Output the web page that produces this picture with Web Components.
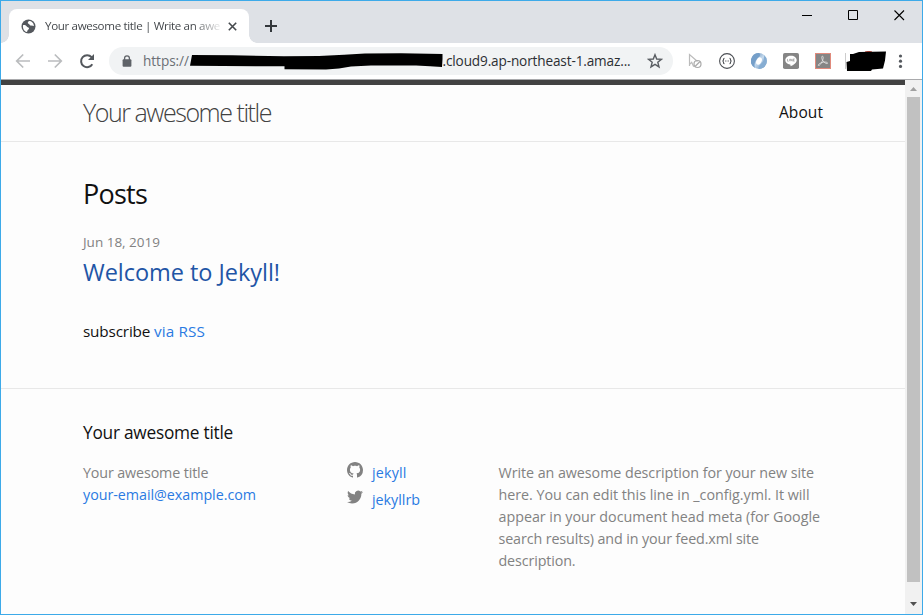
<!DOCTYPE html>
<html lang="en">
<head>
<meta charset="utf-8">
<title>Your awesome title | Write an awesome description</title>
<style>
body{margin:0;overflow:hidden;font-family:"Open Sans","Noto Sans",sans-serif;background:#fff}
</style>
</head>
<body>
<browser-window>
  <tab-strip slot="tabs"></tab-strip>
  <address-bar slot="toolbar"></address-bar>
  <site-page slot="page"></site-page>
  <scroll-bar slot="scroll"></scroll-bar>
</browser-window>
<script>
const define = (name, html) => customElements.define(name, class extends HTMLElement {
  constructor() {
    super();
    this.attachShadow({mode: 'open'}).innerHTML = html;
  }
});

// One line of text, tracked so that it fills the width given in "w".
customElements.define('fit-text', class extends HTMLElement {
  constructor() {
    super();
    this.attachShadow({mode: 'open'}).innerHTML =
      '<style>:host{display:inline-block;white-space:nowrap}span{display:inline-block}</style><span><slot></slot></span>';
  }
  connectedCallback() {
    const target = Number(this.getAttribute('w'));
    const span = this.shadowRoot.querySelector('span');
    const n = this.textContent.length;
    if (target && n) {
      span.style.letterSpacing = (target - span.getBoundingClientRect().width) / n + 'px';
      this.style.width = target + 'px';
    }
  }
});

define('tab-strip', `<style>
:host{display:flex;height:42px;background:#dee1e6;align-items:flex-end;color:#45494d}
.tab{position:relative;width:240px;height:34px;margin-left:8px;background:#fff;border-radius:8px 8px 0 0;display:flex;align-items:center;box-sizing:border-box;padding-left:12px}
.tab:before,.tab:after{content:"";position:absolute;bottom:0;width:8px;height:8px}
.tab:before{left:-8px;background:radial-gradient(circle at 0 0,transparent 7.5px,#fff 8px)}
.tab:after{right:-8px;background:radial-gradient(circle at 100% 0,transparent 7.5px,#fff 8px)}
.name{width:176px;margin:0 0 0 9px;font-size:11.600px;line-height:18px;-webkit-mask:linear-gradient(90deg,#000 148px,transparent 178px);mask:linear-gradient(90deg,#000 148px,transparent 178px)}
.x{margin-left:7px}.plus{margin:0 auto 10px 15px}
.controls{display:flex;align-self:flex-start;margin:9px 17px 0 0;gap:35px}
svg{display:block;flex:none}
</style>
<div class="tab"><svg width="15" height="15" viewBox="0 0 15 15"><circle cx="7.5" cy="7.5" r="7" fill="#54585d"/><path d="M2 6.2c1.800-.4 3.200.2 3.800 1.400.4.900 1.600.5 2.100 1.400.5 1-.7 1.500-1.300 2.300-.3.600-.2 1.300-.7 1.700C3.200 12.500 1.600 9.500 2 6.200zM8 2.100c-.8.600-1.300 1.200-1.200 1.900.2.900 1.300.6 1.500 1.300.2 1 1.400 1.500 2.300 1.300.9-.1 1.400.5 2.300.4C12.900 4.200 10.500 2.100 8 2.100z" fill="#fff"/></svg>
<div class="name"><fit-text w="175">Your awesome title | Write an awe</fit-text></div>
<svg class="x" width="9" height="9"><path d="M.8.8l7.400 7.400M8.200.8L.8 8.200" stroke="#45494d" stroke-width="1.600"/></svg></div>
<svg class="plus" width="14" height="14"><path d="M7 1v12M1 7h12" stroke="#33373b" stroke-width="2"/></svg>
<div class="controls"><svg width="11" height="11"><path d="M0 5.500h10" stroke="#000"/></svg><svg width="11" height="11"><path d="M.5.500h9v9h-9z" fill="none" stroke="#000"/></svg><svg width="11" height="11"><path d="M.5.500l9.500 9.500M10 .5l-9.500 9.500" stroke="#000" stroke-width="1.100"/></svg></div>`);

define('address-bar', `<style>
:host{position:relative;display:flex;align-items:center;height:36px;background:#fff;border-bottom:1px solid #a9aaac}
svg{display:block;flex:none}
.nav{display:flex;gap:16px;margin-left:14px}
.pill{display:flex;align-items:center;box-sizing:border-box;width:564px;height:28px;margin-left:14px;border-radius:14px;background:#f1f3f4;padding:0 9px 0 13px}
.url{display:flex;margin-left:11px;width:488px;font-size:13.600px;line-height:20px;color:#2c2f33}
.url .gray{color:#6b6f74;width:49px}.host{margin-left:250.500px}
.star{margin-left:16px}
.ext{display:flex;align-items:center;gap:16px;margin-left:14px}
.mark{position:absolute;left:0;top:0}
</style>
<div class="nav"><svg width="16" height="16" fill="none" stroke="#babcbe" stroke-width="1.700"><path d="M15 8H2M8.200 1.500L1.700 8l6.500 6.500"/></svg><svg width="16" height="16" fill="none" stroke="#babcbe" stroke-width="1.700"><path d="M1 8h13M7.800 1.500L14.300 8l-6.500 6.500"/></svg><svg width="16" height="16" fill="none" stroke="#54585d" stroke-width="2"><path d="M13.300 11.200A6 6 0 1 1 12.600 4.200L13.800 5.800"/><path d="M15 1v6H9z" fill="#54585d" stroke="none"/></svg></div>
<div class="pill"><svg width="10" height="12" viewBox="0 0 10 12"><path d="M2.600 5V3.200a2.400 2.400 0 0 1 4.800 0V5" fill="none" stroke="#5f6368" stroke-width="1.300"/><rect x=".6" y="4.200" width="8.800" height="7.500" rx="1" fill="#5f6368"/></svg>
<div class="url"><span class="gray"><fit-text w="46">https://</fit-text></span><span class="host"><fit-text w="188">.cloud9.ap-northeast-1.amaz...</fit-text></span></div>
<svg class="star" width="16" height="16" viewBox="0 0 16 16"><path d="M8 1.700l1.700 4.300 4.700.3-3.600 3 1.200 4.600-4-2.500-4 2.500 1.200-4.600-3.600-3 4.700-.3z" fill="none" stroke="#5a5e63" stroke-width="1.400"/></svg></div>
<div class="ext">
<svg width="16" height="16" viewBox="0 0 16 16" fill="none" stroke="#bbb" stroke-width="1.200"><path d="M2.500 13V1.500l8 7M2.500 11.500l2.200-2.200 2 4.500"/><circle cx="10.500" cy="11" r="3.500" stroke="#aaa"/><path d="M8 13.500l5-5" stroke="#aaa"/></svg>
<svg width="16" height="16" viewBox="0 0 16 16" fill="none" stroke="#4c4f54"><circle cx="8" cy="8" r="7.400" stroke-width="1.100"/><path d="M5.500 5.200q-1 0-1 1.300T3.500 8q1 .2 1 1.500t1 1.300M10.500 5.200q1 0 1 1.300t1 1.500q-1 .2-1 1.500t-1 1.300" stroke-width="1.100"/><path d="M6 8h4" stroke-width=".8" stroke-dasharray="1 .5"/></svg>
<svg width="16" height="16" viewBox="0 0 16 16"><defs><linearGradient id="b" x1="0" x2="1" y1="0" y2="1"><stop stop-color="#5581ae"/><stop offset=".5" stop-color="#c5daee"/><stop offset="1" stop-color="#5787b9"/></linearGradient></defs><circle cx="8" cy="8" r="7.900" fill="url(#b)"/><path d="M8 0a8 8 0 0 0-4 15q-2-6 4-11 2-2 0-4z" fill="#759fc9"/><path d="M8 16a8 8 0 0 0 5-14q1 6-4 10-2 2-1 4z" fill="#86add2"/><ellipse cx="8" cy="8" rx="2.600" ry="3.800" fill="#fff" transform="rotate(25 8 8)"/></svg>
<svg width="16" height="16" viewBox="0 0 16 16"><rect width="16" height="16" rx="1.800" fill="#858585"/><path d="M8 2.800c-3.200 0-5.700 1.900-5.700 4.400 0 2.200 2 4 4.700 4.300.8.100.5.700.5 1.800 3-1.400 6.200-3.600 6.200-6.100C13.700 4.700 11.200 2.800 8 2.800z" fill="#fff"/><path d="M4.500 5.900v2.300h1.200M6.600 5.900v2.300M7.700 8.200V5.900l1.500 2.300V5.900M11.600 5.900h-1.200v2.300h1.200M10.400 7h1" fill="none" stroke="#8b8b8b" stroke-width=".6"/></svg>
<svg width="16" height="16" viewBox="0 0 16 16"><rect x=".5" y=".5" width="15" height="15" fill="#858585" stroke="#e08a7c"/><path d="M7.300 3.200c1.600 0 .8 3.200-.2 5.300-1 2.200-2.800 4.500-3.700 4-.9-1 2.500-3 5.200-3.400 2-.3 4.300.2 4 1.200-.5 1-3.400-.6-4.700-2.500C6.800 6.200 6.100 3.300 7.300 3.200z" fill="none" stroke="#e4e4e4" stroke-width=".8"/></svg>
</div>
<svg class="mark" width="921" height="36"><path d="M844.500 10v16" stroke="#ccc"/><path d="M864 9q4-1 7 0" stroke="#bd3b2b"/><path d="M849 11h3l6-2 27-.5-1 9-2 8-11 1-1 1.500h-24l-.5-9 3.500-1z"/><g fill="#55595e"><circle cx="899.500" cy="13" r="1.600"/><circle cx="899.500" cy="18.200" r="1.600"/><circle cx="899.500" cy="23.400" r="1.600"/></g><path d="M191 12L231 12.300 283 13.200 318 13 343 11.800 364 10.500 400 10.300 441.500 11V16L441 24 429 23.200 415 22.500H370L350 23.500 338 25.500 325 26.500 283.500 26.300V23.300L189 22.800Z"/></svg>`);

define('scroll-bar', `<style>
:host{display:flex;flex-direction:column;align-items:center;flex:none;width:17px;background:#f1f1f1}
.thumb{width:13px;height:485px;background:#c1c1c1;margin-top:6px}
svg{display:block}.up{margin-top:7px}.down{margin-top:20px}
</style><svg class="up" width="7" height="4"><path d="M3.500 0L7 4H0z" fill="#a0a0a0"/></svg><div class="thumb"></div><svg class="down" width="7" height="4"><path d="M0 0h7L3.500 4z" fill="#505050"/></svg>`);

define('browser-window', `<style>
:host{display:flex;flex-direction:column;box-sizing:border-box;width:923px;height:615px;border:1px solid #3daae9;overflow:hidden}
.view{display:flex;flex:1;min-height:0}
::slotted([slot=page]){flex:1}
</style><slot name="tabs"></slot><slot name="toolbar"></slot><div class="view"><slot name="page"></slot><slot name="scroll"></slot></div>`);

define('site-header', `<style>
:host{display:flex;justify-content:space-between;height:56px;padding:0 82px;border-top:5px solid #424242;border-bottom:1px solid #e8e8e8;line-height:54px;color:#111}
.title{font-size:25px;font-weight:300;color:#424242}.about{font-size:15.500px}
</style><span class="title"><fit-text w="188">Your awesome title</fit-text></span><span class="about"><fit-text w="44">About</fit-text></span>`);

define('post-list', `<style>
:host{display:block;box-sizing:border-box;height:246px;padding:31px 81px 0 82px;color:#111}
h2,h3,p{margin:0;font-weight:400}
h2{font-size:27px;line-height:42px;margin-bottom:15px}
.date{font-size:13.500px;line-height:24px;color:#828282}
h3{font-size:23.500px;line-height:36px;margin-bottom:29px;color:#1f55a6}
p{font-size:15.300px;line-height:24px}
a{color:#2a7ae2}
</style><h2><fit-text w="64">Posts</fit-text></h2><div class="date"><fit-text w="77">Jun 18, 2019</fit-text></div><h3><fit-text w="197">Welcome to Jekyll!</fit-text></h3><p><fit-text w="71">subscribe&nbsp;</fit-text><a><fit-text w="51">via RSS</fit-text></a></p>`);

define('social-link', `<style>
:host{display:flex;height:27px;line-height:22px;color:#2a7ae2}
</style><slot name="icon"></slot><slot></slot>`);

define('site-footer', `<style>
:host{display:block;padding:30px 81px 0 82px;border-top:1px solid #e8e8e8;color:#828282;font-size:14.300px;line-height:22px}
h2{margin:0 0 16px;font-size:17.300px;line-height:27px;font-weight:400;color:#111}
.cols{display:grid;grid-template-columns:264px 151.500px 1fr}
.cols>div{display:flex;flex-direction:column;align-items:flex-start}
a{color:#2a7ae2}
svg{display:block;flex:none;width:16px;height:16px;margin:0 9px 0 0;fill:#828282}
</style><h2><fit-text w="150">Your awesome title</fit-text></h2>
<div class="cols"><div><fit-text w="125.500">Your awesome title</fit-text><a><fit-text w="173">your-email@example.com</fit-text></a></div>
<div><social-link><svg slot="icon" viewBox="0 0 16 16"><path d="M8 0C3.580 0 0 3.580 0 8c0 3.540 2.290 6.530 5.470 7.590.4.070.55-.17.55-.38 0-.19-.01-.82-.01-1.490-2.010.37-2.530-.49-2.690-.94-.09-.23-.48-.94-.82-1.130-.28-.15-.68-.52-.01-.53.63-.01 1.080.58 1.230.82.72 1.210 1.870.87 2.330.66.07-.52.28-.87.51-1.070-1.780-.2-3.640-.89-3.640-3.950 0-.87.31-1.590.82-2.150-.08-.2-.36-1.020.08-2.120 0 0 .67-.21 2.200.82.64-.18 1.320-.27 2-.27s1.360.09 2 .27c1.530-1.040 2.200-.82 2.200-.82.44 1.100.16 1.920.08 2.120.51.56.82 1.270.82 2.150 0 3.070-1.870 3.750-3.650 3.950.29.25.54.73.54 1.480 0 1.070-.01 1.930-.01 2.200 0 .21.15.46.55.38A8.010 8.010 0 0 0 16 8c0-4.420-3.580-8-8-8z"/></svg><fit-text w="34.500">jekyll</fit-text></social-link>
<social-link><svg slot="icon" viewBox="0 0 16 16"><path d="M15.969 3.058c-.586.26-1.217.436-1.878.515.675-.405 1.194-1.045 1.438-1.809-.632.375-1.332.647-2.076.793A3.270 3.270 0 0 0 7.880 5.540C5.163 5.404 2.753 4.102 1.140 2.124c-.281.482-.442 1.044-.442 1.643 0 1.134.577 2.135 1.455 2.721-.536-.017-1.040-.164-1.481-.409v.041c0 1.584 1.127 2.906 2.623 3.206a3.280 3.280 0 0 1-1.477.056c.416 1.299 1.624 2.245 3.055 2.271A6.570 6.570 0 0 1 0 13.009a9.270 9.270 0 0 0 5.020 1.472c6.024 0 9.318-4.990 9.318-9.318 0-.142-.003-.283-.010-.424a6.650 6.650 0 0 0 1.641-1.681z"/></svg><fit-text w="48">jekyllrb</fit-text></social-link></div>
<div><fit-text w="315.500">Write an awesome description for your new site</fit-text><fit-text w="311">here. You can edit this line in _config.yml. It will</fit-text><fit-text w="321.500">appear in your document head meta (for Google</fit-text><fit-text w="260.500">search results) and in your feed.xml site</fit-text><fit-text w="77">description.</fit-text></div></div>`);

define('site-page', `<style>:host{display:block;background:#fdfdfd}</style><site-header></site-header><post-list></post-list><site-footer></site-footer>`);
</script>
</body>
</html>
